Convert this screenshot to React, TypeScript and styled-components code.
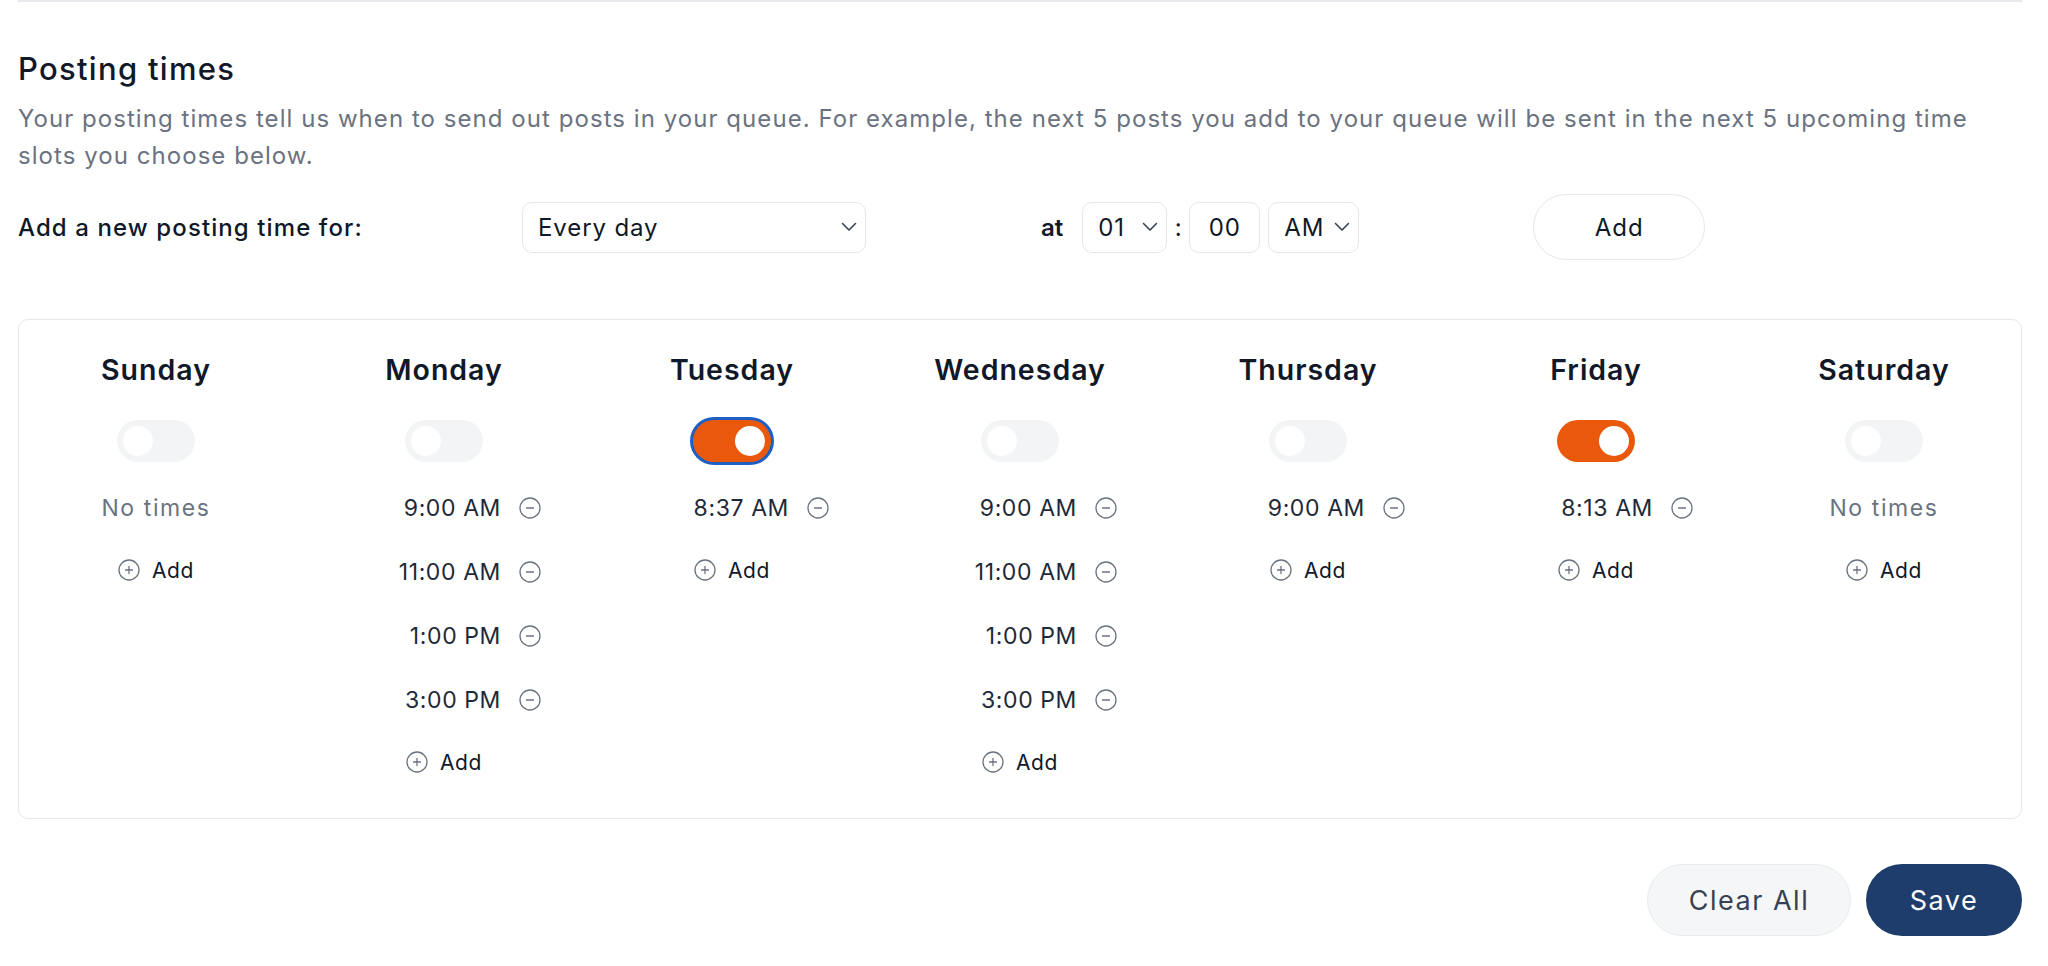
import styled, { createGlobalStyle } from 'styled-components'

const GlobalStyle = createGlobalStyle`
  html, body {
    margin: 0;
    padding: 0;
    background: #ffffff;
  }
  body {
    font-family: Inter, "Noto Sans", "Liberation Sans", sans-serif;
    color: #111827;
  }
`

const DAYS = [
  { name: 'Sunday', on: false, times: [] as string[] },
  { name: 'Monday', on: false, times: ['9:00 AM', '11:00 AM', '1:00 PM', '3:00 PM'] },
  { name: 'Tuesday', on: true, focused: true, times: ['8:37 AM'] },
  { name: 'Wednesday', on: false, times: ['9:00 AM', '11:00 AM', '1:00 PM', '3:00 PM'] },
  { name: 'Thursday', on: false, times: ['9:00 AM'] },
  { name: 'Friday', on: true, times: ['8:13 AM'] },
  { name: 'Saturday', on: false, times: [] as string[] },
]

const Chevron = () => (
  <svg width="16" height="10" viewBox="0 0 16 10" fill="none">
    <path d="M1.5 1.5L8 8L14.5 1.5" stroke="#374151" strokeWidth="1.6" strokeLinecap="round" strokeLinejoin="round" />
  </svg>
)

const CircleIcon = ({ plus }: { plus?: boolean }) => (
  <svg width="22" height="22" viewBox="0 0 22 22" fill="none">
    <circle cx="11" cy="11" r="10" stroke="#6b7280" strokeWidth="1.3" />
    <path d="M7.5 11H14.5" stroke="#6b7280" strokeWidth="1.3" strokeLinecap="round" />
    {plus && <path d="M11 7.5V14.5" stroke="#6b7280" strokeWidth="1.3" strokeLinecap="round" />}
  </svg>
)

const App = () => {
  return (
    <Page>
      <GlobalStyle />
      <TopRule />
      <Title>Posting times</Title>
      <Description>
        Your posting times tell us when to send out posts in your queue. For example, the next 5 posts you add to your
        queue will be sent in the next 5 upcoming time slots you choose below.
      </Description>

      <AddRow>
        <Label>Add a new posting time for:</Label>
        <SelectBox $width={344}>
          <span>Every day</span>
          <Chevron />
        </SelectBox>
        <TimeGroup>
          <AtLabel>at</AtLabel>
          <SelectBox $width={85}>
            <span>01</span>
            <Chevron />
          </SelectBox>
          <Colon>:</Colon>
          <SelectBox $width={71} $center>
            <span>00</span>
          </SelectBox>
          <SelectBox $width={91}>
            <span>AM</span>
            <Chevron />
          </SelectBox>
        </TimeGroup>
        <AddButton>Add</AddButton>
      </AddRow>

      <Card>
        <DayGrid>
          {DAYS.map((day) => (
            <DayColumn key={day.name}>
              <DayName>{day.name}</DayName>
              <Toggle $on={day.on} $focused={!!day.focused}>
                <Knob $on={day.on} />
              </Toggle>
              <TimeList>
                {day.times.length === 0 ? (
                  <EmptyText>No times</EmptyText>
                ) : (
                  day.times.map((t) => (
                    <TimeRow key={t}>
                      <TimeText>{t}</TimeText>
                      <CircleIcon />
                    </TimeRow>
                  ))
                )}
                <AddLink>
                  <CircleIcon plus />
                  <span>Add</span>
                </AddLink>
              </TimeList>
            </DayColumn>
          ))}
        </DayGrid>
      </Card>

      <Footer>
        <GhostButton>Clear All</GhostButton>
        <PrimaryButton>Save</PrimaryButton>
      </Footer>
    </Page>
  )
}

const Page = styled.div`
  width: 2004px;
  margin-left: 18px;
  padding-bottom: 29px;
`

const TopRule = styled.div`
  height: 2px;
  background: #e9eaee;
`

const Title = styled.h2`
  margin: 47px 0 0;
  font-size: 31px;
  line-height: 40px;
  letter-spacing: 1.3px;
  font-weight: 500;
  color: #111827;
`

const Description = styled.p`
  margin: 12px 0 0;
  font-size: 24px;
  line-height: 36.5px;
  letter-spacing: 1.05px;
  color: #6b7280;
  max-width: 1990px;
`

const AddRow = styled.div`
  display: flex;
  align-items: center;
  height: 66px;
  margin-top: 20px;
`

const Label = styled.div`
  width: 504px;
  font-size: 24px;
  letter-spacing: 1.1px;
  font-weight: 500;
  color: #111827;
`

const SelectBox = styled.div<{ $width: number; $center?: boolean }>`
  box-sizing: border-box;
  width: ${(p) => p.$width}px;
  height: 51px;
  display: flex;
  align-items: center;
  justify-content: ${(p) => (p.$center ? 'center' : 'space-between')};
  padding: ${(p) => (p.$center ? '0' : '0 8px 0 15px')};
  border: 1px solid #e5e7eb;
  border-radius: 10px;
  background: #ffffff;
  font-size: 24px;
  letter-spacing: 0.9px;
  color: #111827;
`

const TimeGroup = styled.div`
  display: flex;
  align-items: center;
  gap: 8px;
  margin-left: 175px;
`

const AtLabel = styled.span`
  font-size: 24px;
  font-weight: 600;
  color: #111827;
  margin-right: 11px;
`

const Colon = styled.span`
  font-size: 24px;
  color: #111827;
  margin: 0 -0.5px;
`

const AddButton = styled.button`
  margin-left: 174px;
  width: 172px;
  height: 66px;
  border: 1px solid #e5e7eb;
  border-radius: 33px;
  background: #ffffff;
  font-family: inherit;
  font-size: 24px;
  letter-spacing: 1px;
  font-weight: 400;
  color: #111827;
`

const Card = styled.div`
  margin-top: 59px;
  border: 1px solid #e5e7eb;
  border-radius: 10px;
  padding: 30px 0 38px;
`

const DayGrid = styled.div`
  display: grid;
  grid-template-columns: repeat(7, 288px);
  justify-content: center;
`

const DayColumn = styled.div`
  display: flex;
  flex-direction: column;
  align-items: center;
`

const DayName = styled.div`
  font-size: 28.5px;
  line-height: 40px;
  letter-spacing: 1px;
  font-weight: 600;
  color: #111827;
`

const Toggle = styled.div<{ $on: boolean; $focused: boolean }>`
  box-sizing: border-box;
  margin-top: 30px;
  width: 78px;
  height: 42px;
  border-radius: 21px;
  padding: 6px;
  display: flex;
  align-items: center;
  background: ${(p) => (p.$on ? '#ea580c' : '#f3f4f6')};
  box-shadow: ${(p) => (p.$focused ? '0 0 0 3px #1f5fc4' : 'none')};
`

const Knob = styled.div<{ $on: boolean }>`
  width: 30px;
  height: 30px;
  border-radius: 50%;
  background: #ffffff;
  margin-left: ${(p) => (p.$on ? 'auto' : '0')};
`

const TimeList = styled.div`
  margin-top: 26px;
  width: 100%;
  display: flex;
  flex-direction: column;
  align-items: center;
  gap: 24px;
`

const TimeRow = styled.div`
  box-sizing: border-box;
  width: 100%;
  height: 40px;
  display: flex;
  align-items: center;
  justify-content: flex-end;
  gap: 18px;
  padding-right: 47px;
`

const TimeText = styled.span`
  font-size: 23px;
  letter-spacing: 0.6px;
  color: #1f2937;
`

const EmptyText = styled.div`
  height: 40px;
  line-height: 40px;
  font-size: 23px;
  letter-spacing: 1.6px;
  color: #6b7280;
`

const AddLink = styled.div`
  height: 36px;
  display: flex;
  align-items: center;
  gap: 12px;
  font-size: 21px;
  letter-spacing: 0.6px;
  font-weight: 400;
  color: #111827;
`

const Footer = styled.div`
  display: flex;
  justify-content: flex-end;
  gap: 15px;
  margin-top: 45px;
`

const GhostButton = styled.button`
  width: 204px;
  height: 72px;
  border: 1px solid #e8eaee;
  border-radius: 36px;
  background: #f5f6f8;
  font-family: inherit;
  font-size: 27px;
  letter-spacing: 1.5px;
  color: #374151;
`

const PrimaryButton = styled.button`
  width: 156px;
  height: 72px;
  border: none;
  border-radius: 36px;
  background: #1e3d6d;
  font-family: inherit;
  font-size: 27px;
  letter-spacing: 1.5px;
  color: #ffffff;
`

export default App
